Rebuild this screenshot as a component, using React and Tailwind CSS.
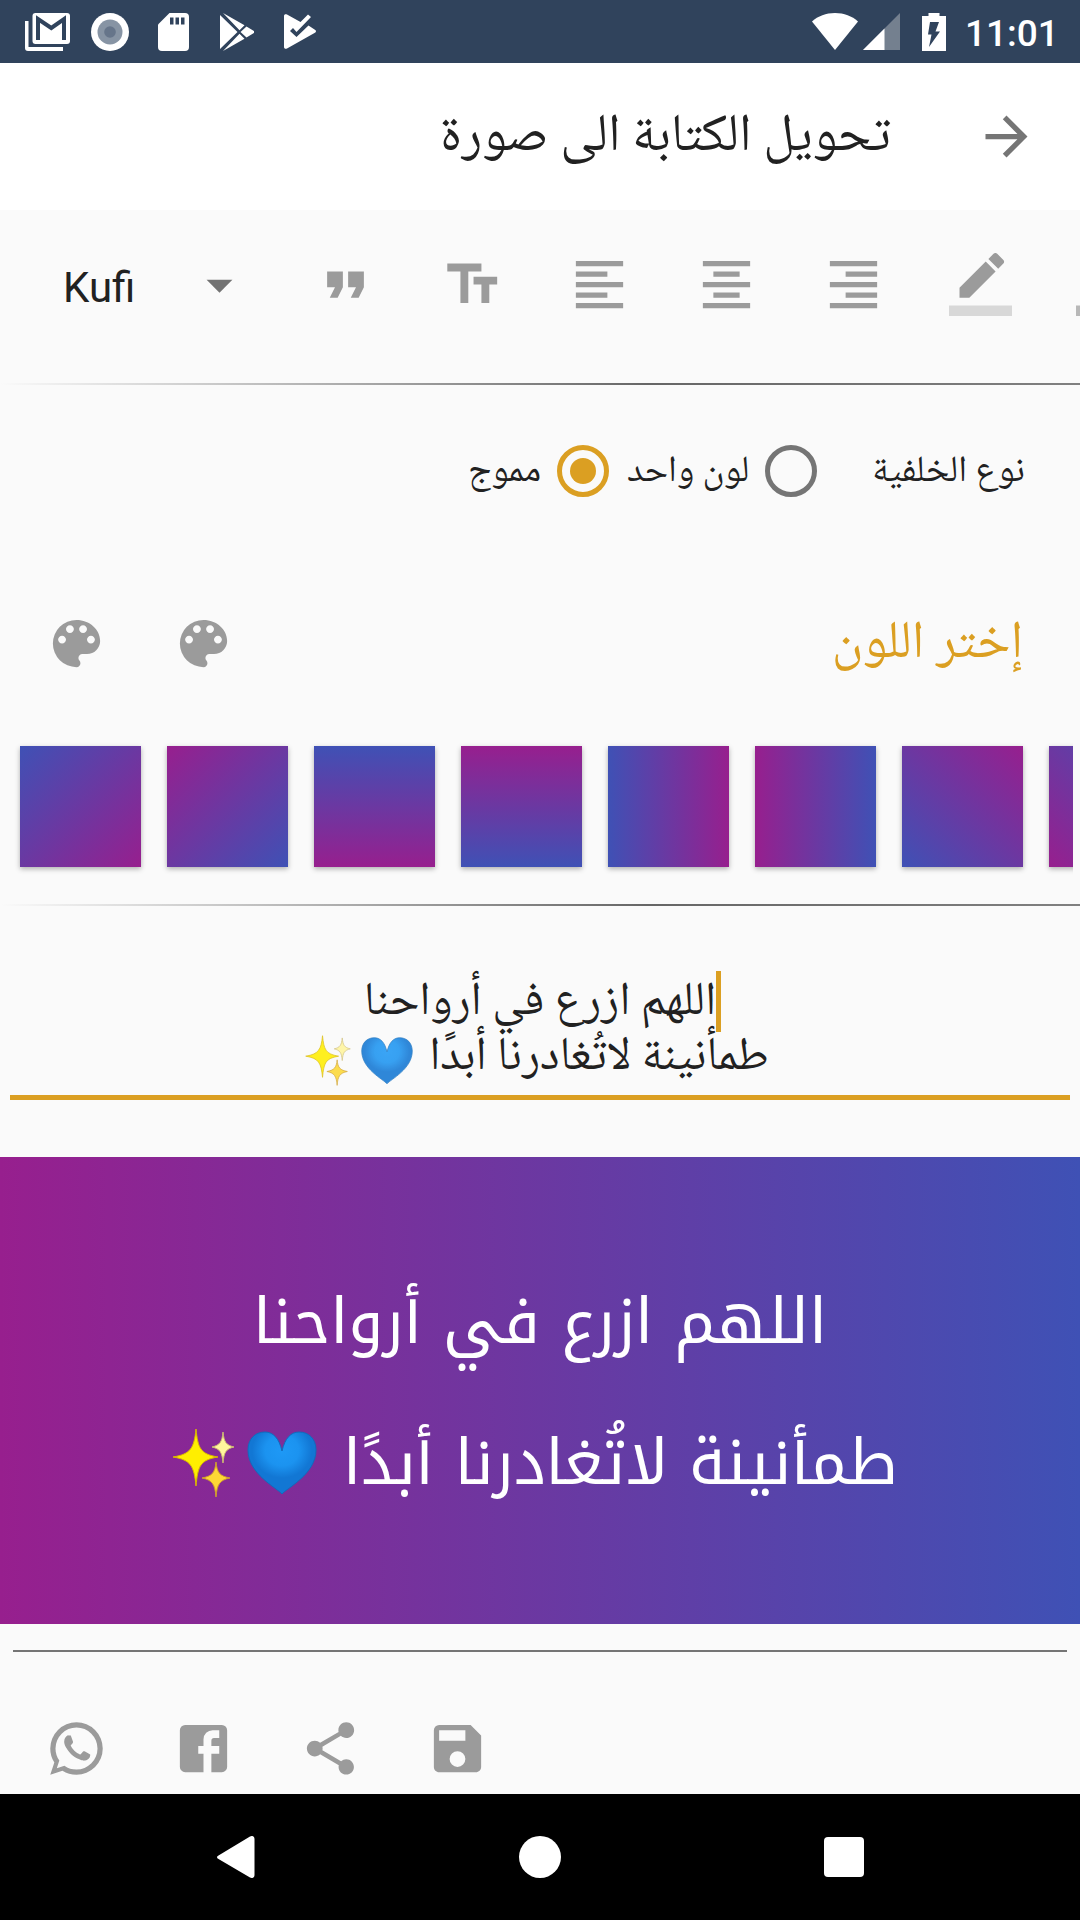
const ICONS = {
  arrow: "M12 4l-1.41 1.41L16.17 11H4v2h12.17l-5.58 5.59L12 20l8-8z",
  dropdown: "M7 10l5 5 5-5z",
  quote: "M6 17h3l2-4V7H5v6h3zm8 0h3l2-4V7h-6v6h3z",
  size: "M2.4 4v3h5v12h3V7h5V4h-13zm19 5h-9v3h3v7h3v-7h3V9z",
  left: "M15 15H3v2h12v-2zm0-8H3v2h12V7zM3 13h18v-2H3v2zm0 8h18v-2H3v2zM3 3v2h18V3H3z",
  center: "M7 15v2h10v-2H7zm-4 6h18v-2H3v2zm0-8h18v-2H3v2zm4-6v2h10V7H7zM3 3v2h18V3H3z",
  right: "M3 21h18v-2H3v2zm6-4h12v-2H9v2zm-6-4h18v-2H3v2zm6-4h12V7H9v2zM3 3v2h18V3H3z",
  palette:
    "M12 3a9 9 0 0 0 0 18c.83 0 1.5-.67 1.5-1.5 0-.39-.15-.74-.39-1.01-.23-.26-.38-.61-.38-.99 0-.83.67-1.5 1.5-1.5H16c2.76 0 5-2.24 5-5 0-4.42-4.03-8-9-8zm-5.5 9c-.83 0-1.5-.67-1.5-1.5S5.67 9 6.5 9 8 9.67 8 10.5 7.33 12 6.5 12zm3-4C8.67 8 8 7.33 8 6.5S8.67 5 9.5 5s1.5.67 1.5 1.5S10.33 8 9.5 8zm5 0c-.83 0-1.5-.67-1.5-1.5S13.67 5 14.5 5s1.5.67 1.5 1.5S15.33 8 14.5 8zm3 4c-.83 0-1.5-.67-1.5-1.5S16.67 9 17.5 9s1.5.67 1.5 1.5-.67 1.5-1.5 1.5z",
  whatsapp:
    "M16.75 13.96c.25.13.41.2.46.3.06.11.04.61-.21 1.18-.2.56-1.24 1.1-1.7 1.12-.46.02-.47.36-2.96-.73-2.49-1.09-3.99-3.75-4.11-3.92-.12-.17-.96-1.38-.92-2.61.05-1.22.69-1.8.95-2.04.24-.26.51-.29.68-.26h.47c.15 0 .36-.06.55.45l.69 1.87c.06.13.1.28.01.44l-.27.41-.39.42c-.12.12-.26.25-.12.5.12.26.62 1.09 1.32 1.78.91.88 1.71 1.17 1.95 1.3.24.14.39.12.54-.04l.81-.94c.19-.25.35-.19.58-.11l1.67.88M12 2a10 10 0 0 1 10 10 10 10 0 0 1-10 10c-1.97 0-3.8-.57-5.35-1.55L2 22l1.55-4.65A9.969 9.969 0 0 1 2 12 10 10 0 0 1 12 2m0 2a8 8 0 0 0-8 8c0 1.72.54 3.31 1.46 4.61L4.5 19.5l2.89-.96A7.95 7.95 0 0 0 12 20a8 8 0 0 0 8-8 8 8 0 0 0-8-8z",
  facebook:
    "M5 3h14a2 2 0 0 1 2 2v14a2 2 0 0 1-2 2h-4v-7h3v-3h-3V9a1 1 0 0 1 1-1h2V5h-2.5A3.5 3.5 0 0 0 12 8.5V11h-2v3h2v7H5a2 2 0 0 1-2-2V5a2 2 0 0 1 2-2z",
  share:
    "M18 16.08c-.76 0-1.44.3-1.96.77L8.91 12.7c.05-.23.09-.46.09-.7s-.04-.47-.09-.7l7.05-4.11c.54.5 1.25.81 2.04.81 1.66 0 3-1.34 3-3s-1.34-3-3-3-3 1.34-3 3c0 .24.04.47.09.7L8.04 9.81C7.5 9.31 6.79 9 6 9c-1.66 0-3 1.34-3 3s1.34 3 3 3c.79 0 1.5-.31 2.04-.81l7.12 4.16c-.05.21-.08.43-.08.65 0 1.61 1.31 2.92 2.92 2.92s2.92-1.31 2.92-2.92-1.31-2.92-2.92-2.92z",
  save: "M17 3H5a2 2 0 0 0-2 2v14c0 1.1.9 2 2 2h14c1.1 0 2-.9 2-2V7l-4-4zm-5 16a3 3 0 1 1 0-6 3 3 0 0 1 0 6zm3-10H5V5h10v4z",
};

function Icon({ name, className = "text-[#9b9b9b]" }) {
  return (
    <svg viewBox="0 0 24 24" fill="currentColor" className={`size-[63px] shrink-0 ${className}`}>
      <path d={ICONS[name]} />
    </svg>
  );
}

function ColorPen({ bar }) {
  return (
    <svg viewBox="0 0 24 24" className="size-[63px] shrink-0">
      <path
        fill="#9b9b9b"
        d="M17.75 7L14 3.25l-10 10V17h3.75l10-10zm2.96-2.96c.39-.39.39-1.02 0-1.41L18.37.29c-.39-.39-1.02-.39-1.41 0L15 2.25 18.75 6l1.96-1.96z"
      />
      <path fill={bar} d="M0 20h24v4H0z" />
    </svg>
  );
}

function Heart({ className }) {
  return (
    <svg viewBox="0 0 70 64" className={`shrink-0 ${className}`}>
      <defs>
        <radialGradient id="heart" cx="0.5" cy="0.3" r="0.55">
          <stop offset="0" stopColor="#1e99f6" />
          <stop offset="0.45" stopColor="#1b93f0" />
          <stop offset="0.8" stopColor="#1277d4" />
        </radialGradient>
      </defs>
      <path
        fill="url(#heart)"
        stroke="#0f6cbd"
        strokeWidth="1"
        d="M35 63C30 57 1 43 1 19 1 8 8 1 18 1c8 0 14 6 17 19C38 7 44 1 52 1c10 0 17 7 17 18C69 43 40 57 35 63z"
      />
    </svg>
  );
}

function Sparkles({ className }) {
  return (
    <svg viewBox="0 0 63 70" strokeWidth="1" className={`shrink-0 ${className}`}>
      <path fill="#ffee00" stroke="#d9b800" d="M24 1C26 20 28 26 46 29 28 32 26 38 24 58 22 38 19 32 1 29 19 26 22 20 24 1z" />
      <path fill="#fff59d" stroke="#cdbb72" d="M51 4C52 14 54 17 62 19 54 21 52 24 51 35 50 24 48 21 40 19 48 17 50 14 51 4z" />
      <path fill="#fdd835" stroke="#cf9f2c" d="M44 34C45 45 48 48 58 50 48 52 45 56 44 69 43 56 40 52 30 50 40 48 43 45 44 34z" />
    </svg>
  );
}

function StatusBar() {
  return (
    <header className="flex h-[63px] shrink-0 items-center justify-between bg-[#30435c] pr-[26px] pl-[25px] text-white">
      <div className="flex items-center">
        <svg viewBox="0 0 45 38" className="mr-[21px] h-[38px] w-[45px]">
          <path fill="#fff" d="M0 8h3.5v26H38v4H3a3 3 0 0 1-3-3z" />
          <rect x="7.5" width="37.5" height="31" rx="3" fill="#fff" />
          <path d="M13 27V6l13.3 9L39 6v21" fill="none" stroke="#30435c" strokeWidth="4" />
        </svg>
        <svg viewBox="0 0 38 38" className="mr-[29px] size-[38px]">
          <circle cx="19" cy="19" r="19" fill="#fff" />
          <circle cx="19" cy="19" r="12.5" fill="#8794a4" />
          <circle cx="19" cy="19" r="5.8" fill="#66758a" />
        </svg>
        <svg viewBox="0 0 31 38" className="mr-[31px] h-[38px] w-[31px]">
          <path fill="#fff" d="M11.5 0H27a4 4 0 0 1 4 4v30a4 4 0 0 1-4 4H4a4 4 0 0 1-4-4V11.5z" />
          <path fill="#30435c" d="M12 4.5h3.5v7H12zM17.5 4.5H21v7h-3.5zM23 4.5h3.5v7H23z" />
        </svg>
        <svg viewBox="0 0 34 38" className="mr-[30px] h-[38px] w-[34px]" fill="#fff">
          <path d="M0 2l17.5 17L0 36zM3 0l21.5 12.3-5 5zM3 38l16.5-17.3 5 5zM26.5 13.5l7 4.3a1.5 1.5 0 0 1 0 2.4l-7 4.3-6-5.5z" />
        </svg>
        <svg viewBox="0 0 32 35" className="h-[35px] w-[32px]">
          <path
            fill="#fff"
            d="M0 2C0 .3 1.5-.3 3 .5L16.5 8 24 .5 27 3 12.500 18 9 14l-3 3 6.500 6L24.500 11.500l6 4c2 1.100 2 2.500 0 3.600L3 34.500c-1.500.8-3 .2-3-1.500z"
          />
        </svg>
      </div>
      <div className="flex items-center">
        <svg viewBox="0 0 46 37" className="mr-[5px] h-[37px] w-[46px]">
          <path fill="#fff" d="M23 37L0 8.5C6 3 14 0 23 0s17 3 23 8.5z" />
        </svg>
        <svg viewBox="0 0 37 37" className="mr-[22px] size-[37px]">
          <path fill="#74808f" d="M37 0v37H0z" />
          <path fill="#fff" d="M21.5 15.5V37H0z" />
        </svg>
        <svg viewBox="0 0 24 38" className="mr-[19px] h-[38px] w-6">
          <path fill="#fff" d="M6.5 0h11v3H24v35H0V3h6.5z" />
          <path fill="#30435c" d="M8 9h9l-3.5 9.5H18L7 34l2.5-12.5H6z" />
        </svg>
        <span className="w-[89px] pt-[3px] text-[37px] leading-none font-medium">11:01</span>
      </div>
    </header>
  );
}

function Radio({ label, checked, className }) {
  return (
    <label className={`flex items-center ${className}`}>
      <span
        className={`flex size-[52px] shrink-0 items-center justify-center rounded-full border-[5px] ${
          checked ? "border-[#db9f22]" : "border-[#757575]"
        }`}
      >
        {checked && <span className="size-[26px] rounded-full bg-[#db9f22]" />}
      </span>
      <span className="mr-4 pt-[3px]">{label}</span>
    </label>
  );
}

const SWATCHES = [
  "bg-[linear-gradient(135deg,#3f51b5,#971f8e)]",
  "bg-[linear-gradient(315deg,#3f51b5,#971f8e)]",
  "bg-[linear-gradient(180deg,#3f51b5,#971f8e)]",
  "bg-[linear-gradient(0deg,#3f51b5,#971f8e)]",
  "bg-[linear-gradient(90deg,#3f51b5,#971f8e)]",
  "bg-[linear-gradient(270deg,#3f51b5,#971f8e)]",
  "bg-[linear-gradient(45deg,#3f51b5,#971f8e)]",
  "bg-[linear-gradient(225deg,#3f51b5,#971f8e)]",
];

function Divider() {
  return <div className="h-[2px] shrink-0 bg-[linear-gradient(90deg,#fafafa,#666_60%,#808080)]" />;
}

export default function App() {
  return (
    <div className="flex h-[1920px] w-[1080px] flex-col overflow-hidden bg-[#fafafa] font-['Roboto','Noto_Naskh_Arabic',sans-serif] text-[#212121]">
      <StatusBar />

      <div dir="rtl" className="flex h-[147px] shrink-0 items-center bg-white pr-[42px]">
        <Icon name="arrow" className="text-[#757575]" />
        <h1 className="mr-[84px] pt-[4px] font-['Noto_Naskh_Arabic',serif] text-[53px] leading-[80px] font-[450] whitespace-nowrap">
          تحويل الكتابة الى صورة
        </h1>
      </div>

      <div className="flex h-[173px] shrink-0 items-start overflow-hidden pt-[43px] pl-[63px]">
        <span className="w-[125px] shrink-0 pt-[10px] text-[42px] leading-[50px]">Kufi</span>
        <Icon name="dropdown" className="mr-[63px] pt-px text-[#737373]" />
        <div className="flex gap-16">
          <Icon name="quote" />
          <Icon name="size" />
          <Icon name="left" />
          <Icon name="center" />
          <Icon name="right" />
          <ColorPen bar="#d8d8d8" />
          <ColorPen bar="#b8b8b8" />
        </div>
      </div>
      <Divider />

      <div
        dir="rtl"
        className="flex h-[172px] shrink-0 items-center pr-[55px] font-['Noto_Naskh_Arabic',serif] text-[37px] leading-[56px] font-[450] whitespace-nowrap"
      >
        <span className="pt-[3px]">نوع الخلفية</span>
        <Radio label="لون واحد" className="mr-[55px]" />
        <Radio label="مموج" checked className="mr-[18px]" />
      </div>

      <div className="flex h-[171px] shrink-0 items-center justify-between pt-px pr-[57px] pl-[45px]">
        <div className="flex gap-16">
          <Icon name="palette" />
          <Icon name="palette" />
        </div>
        <h2 dir="rtl" className="pt-[5px] font-['Noto_Naskh_Arabic',serif] text-[53px] leading-[80px] font-[450] text-[#db9f22]">
          إختر اللون
        </h2>
      </div>

      <div className="mr-[7px] flex h-[176px] shrink-0 gap-[26px] overflow-hidden pt-[18px] pl-5">
        {SWATCHES.map((s) => (
          <div key={s} className={`size-[121px] shrink-0 shadow-[0_2px_5px_rgba(0,0,0,0.3)] ${s}`} />
        ))}
      </div>
      <Divider />

      <div className="mx-[10px] flex h-[194px] shrink-0 flex-col items-center border-b-[5px] border-[#db9f22] pt-[70px] font-['Noto_Naskh_Arabic',serif] text-[47px] leading-[56px] font-[450] whitespace-nowrap">
        <div dir="rtl" className="relative h-[55px]">
          <span>اللهم ازرع في أرواحنا</span>
          <span className="absolute -top-[5px] -right-[5px] h-[61px] w-[5px] bg-[#db9f22]" />
        </div>
        <div dir="rtl" className="flex h-14 items-center pr-[6px]">
          <span>طمأنينة لاتُغادرنا أبدًا</span>
          <Heart className="mt-[3px] mr-4 w-[52px] opacity-87" />
          <Sparkles className="mt-[3px] mr-[10px] w-[46px] opacity-87" />
        </div>
      </div>

      <div className="mt-[57px] flex h-[467px] shrink-0 flex-col items-center justify-center bg-[linear-gradient(90deg,#971f8e,#3f51b5)] pt-[5px] font-['Noto_Kufi_Arabic',sans-serif] text-[62.5px] leading-[141px] whitespace-nowrap text-white">
        <div dir="rtl">اللهم ازرع في أرواحنا</div>
        <div dir="rtl" className="flex items-center pr-[11px]">
          <span>طمأنينة لاتُغادرنا أبدًا</span>
          <Heart className="mr-[26px] mb-[2px] w-[70px]" />
          <Sparkles className="mr-[12px] mb-[2px] w-[63px]" />
        </div>
      </div>

      <div className="mx-[13px] mt-[26px] h-[2px] shrink-0 bg-[#757575]" />
      <div className="flex flex-1 gap-16 pt-[65px] pl-[45px]">
        <Icon name="whatsapp" />
        <Icon name="facebook" />
        <Icon name="share" />
        <Icon name="save" />
      </div>

      <nav className="flex h-[126px] shrink-0 items-center bg-black pl-[217px]">
        <svg viewBox="0 0 38 42" className="h-[42px] w-[38px]">
          <path fill="#fff" d="M1.5 19.5L33 .5c2.5-1.3 4.5 0 4.5 2.5v36c0 2.5-2 3.8-4.5 2.5L1.5 23c-2-1.2-2-2.5 0-3.5z" />
        </svg>
        <span className="ml-[264px] size-[42px] rounded-full bg-white" />
        <span className="ml-[263px] size-10 rounded-[4px] bg-white" />
      </nav>
    </div>
  );
}
